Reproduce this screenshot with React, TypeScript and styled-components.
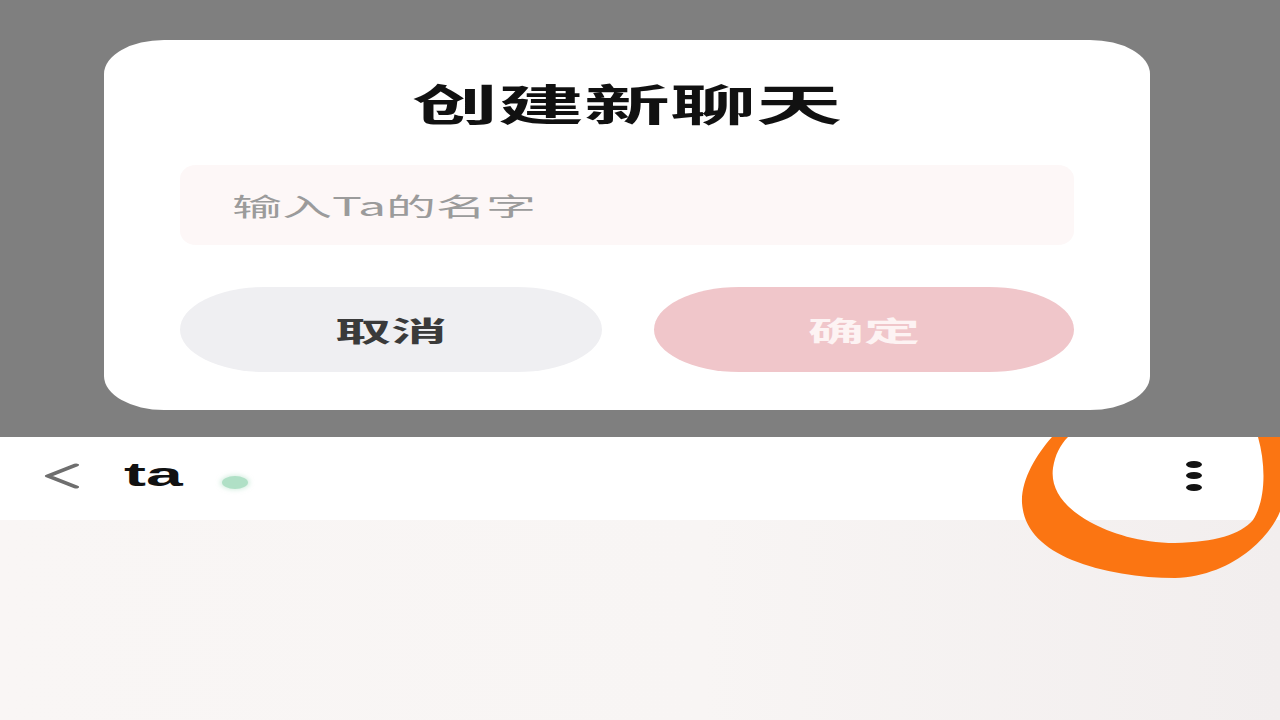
import React from 'react';
import styled, { createGlobalStyle } from 'styled-components';

const Global = createGlobalStyle`
  html, body {
    margin: 0;
    padding: 0;
    width: 1280px;
    height: 720px;
    overflow: hidden;
    background: #f5f1f1;
  }
  #root {
    width: 1280px;
    height: 720px;
    overflow: hidden;
  }
  * { box-sizing: border-box; }
`;

/* The reference is a phone screen stretched 2x horizontally:
   the phone is laid out at 640px wide and scaled on X. */
const Screen = styled.div`
  width: 640px;
  height: 720px;
  transform: scaleX(2);
  transform-origin: 0 0;
  display: flex;
  flex-direction: column;
  font-family: "Noto Sans CJK SC", "Noto Sans", sans-serif;
`;

const Backdrop = styled.div`
  height: 437px;
  flex: none;
  background: #7f7f7f;
  padding: 40px 65px 0 52px;
`;

const Dialog = styled.div`
  height: 370px;
  background: #ffffff;
  border-radius: 30px / 34px;
  padding: 32px 38px 38px;
  display: flex;
  flex-direction: column;
`;

const Title = styled.h2`
  margin: 0;
  font-size: 43px;
  line-height: 60px;
  font-weight: 700;
  color: #111111;
  text-align: center;
`;

const NameInput = styled.input`
  margin-top: 33px;
  height: 80px;
  width: 100%;
  border: none;
  outline: none;
  border-radius: 8px / 14px;
  background: #fdf7f7;
  padding: 0 0 0 26px;
  font-family: inherit;
  font-size: 25px;
  color: #333;
  &::placeholder {
    color: #9b9b9b;
  }
`;

const Actions = styled.div`
  margin-top: 42px;
  height: 85px;
  display: grid;
  grid-template-columns: 211px 210px;
  column-gap: 26px;
`;

const ActionButton = styled.button<{ $primary?: boolean }>`
  border: none;
  border-radius: 43px;
  height: 85px;
  font-family: inherit;
  font-size: 28px;
  font-weight: 700;
  background: ${(p) => (p.$primary ? '#f0c6ca' : '#efeff2')};
  color: ${(p) => (p.$primary ? '#fdf3f3' : '#3a3a3a')};
  cursor: pointer;
`;

const Lower = styled.div`
  position: relative;
  flex: 1;
  display: flex;
  flex-direction: column;
  overflow: hidden;
`;

const Header = styled.div`
  height: 83px;
  flex: none;
  background: #ffffff;
  display: flex;
  align-items: center;
  padding: 0 39px 0 22px;
`;

const BackIcon = styled.svg`
  width: 18px;
  height: 26px;
  flex: none;
  margin-top: -6px;
`;

const ChatName = styled.span`
  margin-left: 22px;
  font-family: "Liberation Sans", Arial, sans-serif;
  font-weight: 700;
  font-size: 33px;
  line-height: 1;
  color: #111;
  margin-top: -8px;
`;

const OnlineDot = styled.span`
  margin-left: 20px;
  width: 13px;
  height: 13px;
  border-radius: 50%;
  background: #b0e0c6;
  box-shadow: 0 0 3px 1px rgba(176, 224, 198, 0.5);
  margin-top: 8px;
`;

const Spacer = styled.div`
  flex: 1;
`;

const Kebab = styled.div`
  display: flex;
  flex-direction: column;
  gap: 4.5px;
  margin-top: -6px;
`;

const KebabDot = styled.span`
  width: 8px;
  height: 7px;
  border-radius: 50%;
  background: #111;
`;

const Content = styled.div`
  flex: 1;
  background: linear-gradient(90deg, #f9f6f5 0%, #f8f5f4 55%, #f2eeee 100%);
`;

const Annotation = styled.svg`
  position: absolute;
  left: 0;
  top: 0;
  width: 640px;
  height: 283px;
  pointer-events: none;
`;

export default function App() {
  return (
    <>
      <Global />
      <Screen>
        <Backdrop>
          <Dialog>
            <Title>创建新聊天</Title>
            <NameInput placeholder="输入Ta的名字" />
            <Actions>
              <ActionButton>取消</ActionButton>
              <ActionButton $primary>确定</ActionButton>
            </Actions>
          </Dialog>
        </Backdrop>
        <Lower>
          <Header>
            <BackIcon viewBox="0 0 18 26">
              <polyline
                points="16,2 2,13 16,24"
                fill="none"
                stroke="#6e6e6e"
                strokeWidth="3"
                strokeLinecap="round"
                strokeLinejoin="round"
              />
            </BackIcon>
            <ChatName>ta</ChatName>
            <OnlineDot />
            <Spacer />
            <Kebab>
              <KebabDot />
              <KebabDot />
              <KebabDot />
            </Kebab>
          </Header>
          <Content />
          <Annotation viewBox="0 437 1280 283" preserveAspectRatio="none">
            <path
              fill="#fb7512"
              d="M1052,437 C1036,455 1021,480 1022,503 C1024,530 1042,547 1072,560 C1102,572 1140,578 1175,578 C1205,577 1230,566 1250,550 C1268,535 1279,518 1282,505 L1282,437 L1258,437 C1266,465 1266,500 1253,520 C1240,535 1215,542 1175,543 C1140,543 1110,533 1090,522 C1065,508 1050,490 1053,468 C1055,455 1060,445 1068,437 Z"
            />
          </Annotation>
        </Lower>
      </Screen>
    </>
  );
}
